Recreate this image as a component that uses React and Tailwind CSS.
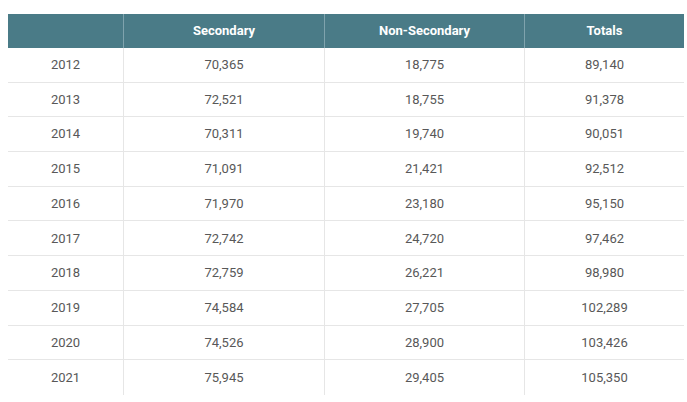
const rows = [
  ['2012', '70,365', '18,775', '89,140'],
  ['2013', '72,521', '18,755', '91,378'],
  ['2014', '70,311', '19,740', '90,051'],
  ['2015', '71,091', '21,421', '92,512'],
  ['2016', '71,970', '23,180', '95,150'],
  ['2017', '72,742', '24,720', '97,462'],
  ['2018', '72,759', '26,221', '98,980'],
  ['2019', '74,584', '27,705', '102,289'],
  ['2020', '74,526', '28,900', '103,426'],
  ['2021', '75,945', '29,405', '105,350'],
]

const App = () => {
  return (
    <div className="w-[687px] h-[402px] bg-white pt-[14px] pl-[8px] font-['Roboto',sans-serif]">
      <div className="w-[676px] text-[13px] text-center">
        {/* Header */}
        <div className="grid grid-cols-[115px_201px_200px_160px] h-[34px] bg-[#4a7b87] text-white font-bold">
          <div></div>
          <div className="flex items-center justify-center border-l border-[#7fa3ad]">Secondary</div>
          <div className="flex items-center justify-center border-l border-[#7fa3ad]">Non-Secondary</div>
          <div className="flex items-center justify-center border-l border-[#7fa3ad]">Totals</div>
        </div>

        {/* Rows */}
        <div className="text-[#585858]">
          {rows.map((row, i) => (
            <div
              key={row[0]}
              className={`grid grid-cols-[115px_201px_200px_160px] h-[34.7px] ${i < rows.length - 1 ? 'border-b border-[#e6e6e6]' : ''}`}
            >
              <div className="flex items-center justify-center">{row[0]}</div>
              <div className="flex items-center justify-center border-l border-[#e6e6e6]">{row[1]}</div>
              <div className="flex items-center justify-center border-l border-[#e6e6e6]">{row[2]}</div>
              <div className="flex items-center justify-center border-l border-[#e6e6e6]">{row[3]}</div>
            </div>
          ))}
        </div>
      </div>
    </div>
  )
}

export default App
